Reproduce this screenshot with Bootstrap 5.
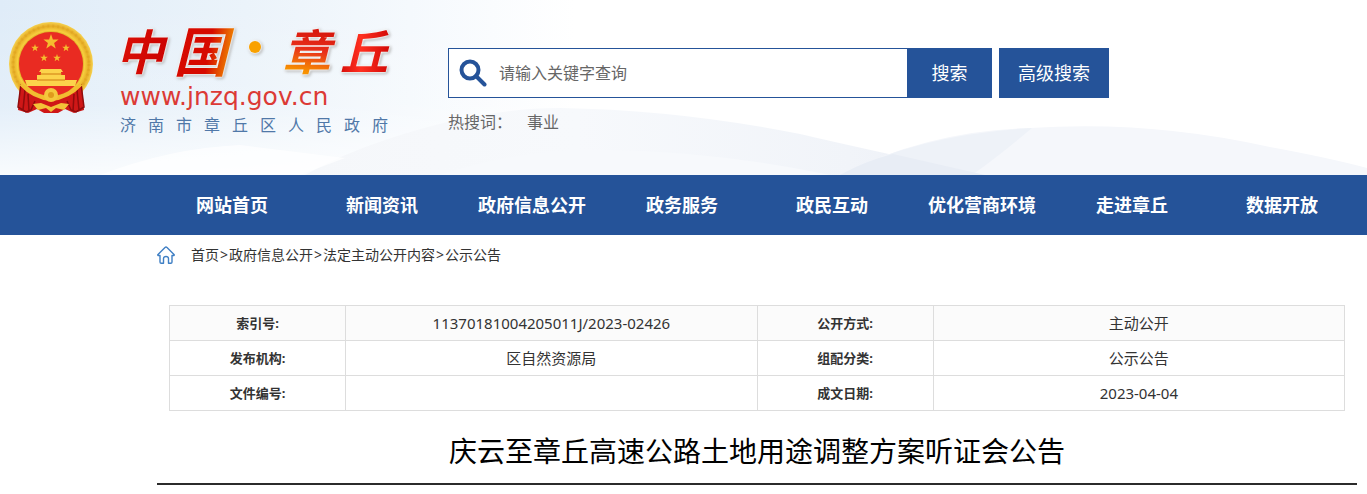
<!DOCTYPE html>
<html lang="zh-CN">
<head>
<meta charset="utf-8">
<meta name="viewport" content="width=device-width, initial-scale=1">
<title>庆云至章丘高速公路土地用途调整方案听证会公告</title>
<link rel="stylesheet" href="https://cdn.jsdelivr.net/npm/bootstrap@5.3.0/dist/css/bootstrap.min.css">
<style>
  :root { --gov-blue: #255399; }
  body { font-family: "Noto Sans", "Noto Sans CJK SC", sans-serif; color: #333; background: #fff; line-height: 24px; }
  a { color: inherit; text-decoration: none; }
  .site-head { min-height: 175px; background: linear-gradient(90deg, #dfecf8 0, #ebf3fa 18%, #f5f9fd 30%, #fff 42%); }
  .head-art { z-index: 0; }
  .head-body { z-index: 1; }
  .logo { width: 388px; padding: 16px 0 0 8px; gap: 26px; }
  .emblem { width: 86px; height: 92px; margin-top: 6px; }
  .logo-text { width: 268px; }
  .brand-name { font: italic 700 54px/66px "Noto Sans CJK SC", sans-serif; margin-left: -4px; filter: drop-shadow(0 0 1px #fff) drop-shadow(0 0 1px #fff) drop-shadow(1px 1px 1px #aaa); }
  .brand-name span { padding: 0 8px; margin: 0 -8px; color: transparent; background: linear-gradient(100deg, #d60a00 60%, #f08a00 90%); -webkit-background-clip: text; background-clip: text; }
  .brand-name .b-small { font-size: 48px; background-image: linear-gradient(100deg, #e01408, #c80000); }
  .brand-name .b-zhang { background-image: linear-gradient(10deg, #f79200 20%, #e8301a 50%, #c80000); }
  .brand-name .b-qiu { background-image: linear-gradient(90deg, #c80000, #ff3020 45%, #c80000); }
  .brand-dot { width: 12px; height: 12px; background: #f9a100; margin: 0 12px 4px; }
  .brand-url { font: 25px/30px "DejaVu Sans", sans-serif; color: #dc3a35; }
  .brand-sub { font-size: 16px; line-height: 26px; color: #5078a8; text-align-last: justify; }
  .search-area { padding: 48px 0 0 60px; }
  .search-row { gap: 7px; }
  .search-box { width: 459px; height: 50px; border: 1px solid var(--gov-blue); border-right: 0; background: #fff; padding-left: 10px; gap: 12px; }
  .search-box input { border: 0; outline: 0; font-size: 16px; color: #666; background: none; padding: 0; }
  .search-box input::placeholder { color: #666; opacity: 1; }
  .btn-gov { height: 50px; padding: 0; border: 0; border-radius: 0; background: var(--gov-blue); color: #fff; font-size: 18px; }
  .btn-gov:hover { background: #1d4480; color: #fff; }
  .w-go { width: 85px; }
  .w-adv { width: 110px; }
  .hot { color: #666; font-size: 16px; margin-top: 12px; gap: 15px; }
  .page-col { padding: 0 10px 0 157px; }
  .main-nav { background: var(--gov-blue); }
  .main-nav a { color: #fff; font-size: 18px; font-weight: 700; line-height: 60px; padding: 0; }
  .crumbs { font-size: 14px; height: 40px; gap: 16px; }
  .crumbs .sep { padding: 0 1px; }
  .info-wrap { padding: 30px 12px 0; }
  .info-table { table-layout: fixed; font-size: 15px; color: #333; border-color: #ddd; text-align: center; vertical-align: middle; }
  .info-table > tbody > tr > * { height: 35px; padding: 0 8px; color: #333; background: #fff; }
  .info-table > tbody > tr:first-child > * { background: #fbfbfb; }
  .info-table th { font-size: 13px; width: 15%; }
  .info-table td { width: 35%; }
  .doc-title { font-size: 28px; line-height: 40px; color: #000; margin: 20px 0 0; padding-bottom: 12px; border-bottom: 2px solid #2b2b2b; font-weight: 400; }
</style>
</head>
<body>
<header class="site-head position-relative overflow-hidden">
  <svg class="head-art position-absolute top-0 start-0 w-100 h-100" viewBox="0 0 1367 175" preserveAspectRatio="none" aria-hidden="true">
    <defs>
      <linearGradient id="fade" x1="0" y1="0" x2="0" y2="1"><stop offset="0" stop-color="#fff" stop-opacity="0"/><stop offset=".6" stop-color="#fff" stop-opacity=".15"/><stop offset="1" stop-color="#fff" stop-opacity=".8"/></linearGradient>
      <linearGradient id="hill" x1="0" y1="0" x2="1" y2="0"><stop offset="0" stop-color="#f5f7fa"/><stop offset=".4" stop-color="#f7f9fc"/><stop offset=".8" stop-color="#f1f4f9"/><stop offset="1" stop-color="#eceff6"/></linearGradient>
    </defs>
    <rect width="1367" height="175" fill="url(#fade)"/>
    <path d="M305 175 Q340 155 385 140 Q480 108 560 108 Q680 110 800 134 Q860 148 985 175Z" fill="url(#hill)"/>
    <path d="M440 175 Q520 148 610 150 Q720 152 830 175Z" fill="#f7f9fc"/>
    <path d="M840 175 Q930 130 1030 128 Q1150 120 1270 147 Q1330 158 1367 168 V175Z" fill="#f5f7fb"/>
    <path d="M840 175 Q920 134 1032 128 Q1000 155 972 175Z" fill="#eef2f8"/>
    <path d="M840 175 Q865 161 893 154 L985 175Z" fill="#e8edf5"/>
    <path d="M100 175 Q170 148 240 145 L345 158 L300 175Z" fill="#fff" opacity=".7"/>
  </svg>
  <div class="head-body position-relative d-flex">
    <a class="logo d-flex align-items-start flex-shrink-0" href="#" aria-label="中国·章丘">
      <svg class="emblem flex-shrink-0" viewBox="0 0 86 92" aria-hidden="true">
        <defs>
          <radialGradient id="gold" cx=".5" cy=".5" r=".5"><stop offset=".72" stop-color="#c98a10"/><stop offset=".8" stop-color="#f7cf3e"/><stop offset=".9" stop-color="#e6ac25"/><stop offset="1" stop-color="#f6d250"/></radialGradient>
          <path id="star" d="M0-8 1.9-2.5 7.6-2.5 3.1 1 4.7 6.5 0 3.2-4.7 6.5-3.1 1-7.6-2.5-1.9-2.5Z"/>
        </defs>
        <circle cx="43" cy="42" r="42" fill="url(#gold)"/>
        <circle cx="43" cy="42" r="38" fill="none" stroke="#d89b1b" stroke-width="3" stroke-dasharray="2 3" opacity=".35"/>
        <circle cx="43" cy="42" r="32" fill="#e92b22"/>
        <g fill="#f5bd2e"><use href="#star" transform="translate(43 20)"/><use href="#star" transform="translate(27 26) scale(.5)"/><use href="#star" transform="translate(58 26) scale(.5)"/><use href="#star" transform="translate(36 36) scale(.5)"/><use href="#star" transform="translate(49 36) scale(.5)"/></g>
        <path d="M33 47H53L55 50H53V53H57V58H69L67 64H19L17 58H29V53H33V50H31Z" fill="#fcd34b"/>
        <path d="M32 52H54M29 58H57" stroke="#cf7d12"/>
        <path d="M12 64C20 68 29 73 36 76L43 70 50 76C57 73 66 68 74 64L76 88 66 91 57 87 50 91H36L29 87 20 91 10 88Z" fill="#cf1717"/>
        <path d="M13 62 10 85 18 90 23 88 27 79M73 62 76 85 68 90 63 88 59 79M17 68 15 88M20 72 21 89M69 68 71 88M66 72 65 89" fill="none" stroke="#8f0c0c" stroke-width="1.5"/>
        <path d="M13 62Q26 76 43 77 60 76 73 62" fill="none" stroke="#f2bd31" stroke-width="4"/>
        <circle cx="43" cy="73" r="7" fill="#f5c73c"/><circle cx="43" cy="73" r="3" fill="#e09a1c"/>
        <path d="M25 82 33 81 43 85 53 81 61 82 56 88 48 86 43 90 38 86 30 88Z" fill="#f3c238"/>
      </svg>
      <span class="logo-text d-block">
        <span class="brand-name d-flex align-items-center justify-content-between"><span class="b-small">中</span><span>国</span><i class="brand-dot rounded-circle"></i><span class="b-small b-zhang">章</span><span class="b-small b-qiu">丘</span></span>
        <span class="brand-url d-block">www.jnzq.gov.cn</span>
        <span class="brand-sub d-block">济南市章丘区人民政府</span>
      </span>
    </a>
    <div class="search-area">
      <form class="search-row d-flex" onsubmit="return false">
        <div class="d-flex">
          <div class="search-box d-flex align-items-center">
            <svg width="28" height="28" viewBox="0 0 28 28" fill="none" stroke="#255399" aria-hidden="true"><circle cx="11" cy="11" r="8.5" stroke-width="4"/><path d="M17 17 25.500 25.500" stroke-width="4" stroke-linecap="round"/></svg>
            <input class="flex-grow-1" type="text" placeholder="请输入关键字查询" aria-label="请输入关键字查询">
          </div>
          <button class="btn btn-gov w-go" type="submit">搜索</button>
        </div>
        <button class="btn btn-gov w-adv" type="button">高级搜索</button>
      </form>
      <div class="hot d-flex"><span>热搜词：</span><a href="#">事业</a></div>
    </div>
  </div>
</header>
<nav class="main-nav">
  <div class="page-col">
    <ul class="nav nav-fill flex-nowrap row row-cols-8 g-0">
      <li class="col nav-item"><a class="nav-link" href="#">网站首页</a></li>
      <li class="col nav-item"><a class="nav-link" href="#">新闻资讯</a></li>
      <li class="col nav-item"><a class="nav-link" href="#">政府信息公开</a></li>
      <li class="col nav-item"><a class="nav-link" href="#">政务服务</a></li>
      <li class="col nav-item"><a class="nav-link" href="#">政民互动</a></li>
      <li class="col nav-item"><a class="nav-link" href="#">优化营商环境</a></li>
      <li class="col nav-item"><a class="nav-link" href="#">走进章丘</a></li>
      <li class="col nav-item"><a class="nav-link" href="#">数据开放</a></li>
    </ul>
  </div>
</nav>
<main class="page-col">
  <nav class="crumbs d-flex align-items-center" aria-label="breadcrumb">
    <svg width="18" height="18" viewBox="0 0 18 18" fill="none" stroke="#3f7fc4" stroke-width="1.400" stroke-linejoin="round" stroke-linecap="round" aria-hidden="true"><path d="M3 9.500H1.200Q.4 9.200 1 8.400L8 1.500Q9 .600 10 1.500L17 8.400Q17.600 9.200 16.800 9.500H15V16Q15 17.200 13.800 17.200H11.500V12.500Q11.300 10.500 9 10.500T6.500 12.500V17.200H4.200Q3 17.200 3 16Z"/></svg>
    <div><a href="#">首页</a><span class="sep">&gt;</span><a href="#">政府信息公开</a><span class="sep">&gt;</span><a href="#">法定主动公开内容</a><span class="sep">&gt;</span><a href="#">公示公告</a></div>
  </nav>
  <div class="info-wrap">
    <table class="table table-bordered info-table mb-0">
      <tbody>
        <tr><th scope="row">索引号:</th><td>11370181004205011J/2023-02426</td><th scope="row">公开方式:</th><td>主动公开</td></tr>
        <tr><th scope="row">发布机构:</th><td>区自然资源局</td><th scope="row">组配分类:</th><td>公示公告</td></tr>
        <tr><th scope="row">文件编号:</th><td></td><th scope="row">成文日期:</th><td>2023-04-04</td></tr>
      </tbody>
    </table>
  </div>
  <h1 class="doc-title text-center">庆云至章丘高速公路土地用途调整方案听证会公告</h1>
</main>
<script src="https://cdn.jsdelivr.net/npm/bootstrap@5.3.0/dist/js/bootstrap.bundle.min.js"></script>
</body>
</html>
